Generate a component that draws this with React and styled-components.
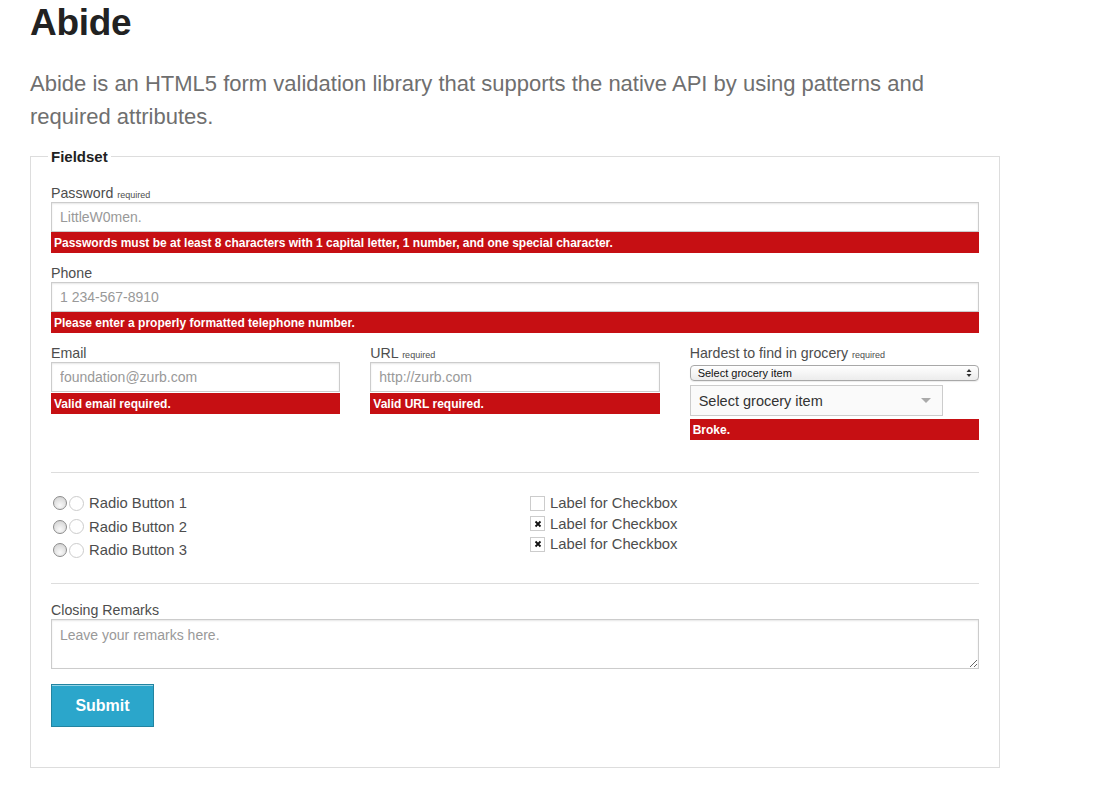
import React from "react";
import styled, { createGlobalStyle } from "styled-components";

const GlobalStyle = createGlobalStyle`
  body {
    margin: 0;
    background: #fff;
    font-family: "Liberation Sans", Arial, sans-serif;
    color: #222;
  }
  * { box-sizing: border-box; }
`;

const Page = styled.div`
  padding: 0 30px 40px 30px;
  width: 1000px;
`;

const Title = styled.h1`
  margin: 0;
  padding-top: 4px;
  font-size: 37px;
  line-height: 38px;
  font-weight: bold;
  color: #222;
  letter-spacing: -0.3px;
`;

const Lead = styled.p`
  margin: 25px 0 0 0;
  font-size: 22px;
  line-height: 33px;
  color: #6f6f6f;
  max-width: 920px;
`;

const Fieldset = styled.fieldset`
  margin: 15px 0 0 0;
  width: 970px;
  border: 1px solid #ddd;
  padding: 0 20px 40px 20px;
`;

const Legend = styled.legend`
  font-weight: bold;
  font-size: 15px;
  color: #222;
  background: #fff;
  padding: 0 3px;
  margin-left: -3px;
`;

const Field = styled.div`
  margin-bottom: ${(p) => (p.$last ? "0" : "10px")};
  margin-top: ${(p) => (p.$first ? "18px" : "0")};
`;

const Label = styled.label`
  display: block;
  font-size: 14.2px;
  line-height: 18px;
  padding-top: 1px;
  color: #4d4d4d;
`;

const Small = styled.small`
  font-size: 9px;
  line-height: 1;
  color: #4d4d4d;
`;

const Input = styled.input`
  display: block;
  width: 100%;
  height: 30px;
  border: 1px solid #ccc;
  box-shadow: inset 0 1px 2px rgba(0, 0, 0, 0.1);
  padding: 0 8px 1px 8px;
  font-family: inherit;
  font-size: 14px;
  color: #333;
  background: #fff;
  &::placeholder { color: #999; }
`;

const Textarea = styled.textarea`
  display: block;
  width: 100%;
  height: 50px;
  border: 1px solid #ccc;
  box-shadow: inset 0 1px 2px rgba(0, 0, 0, 0.1);
  padding: 7px 8px;
  font-family: inherit;
  font-size: 14px;
  color: #333;
  resize: vertical;
  &::placeholder { color: #999; }
`;

const Error = styled.small`
  display: block;
  background: #c60f13;
  color: #fff;
  font-weight: bold;
  font-size: 12px;
  line-height: 14px;
  padding: 4px 3px 3px 3px;
  margin-top: ${(p) => p.$gap || 0}px;
`;

const Row = styled.div`
  display: grid;
  grid-template-columns: ${(p) => p.$cols};
  column-gap: 30px;
`;

const NativeSelect = styled.div`
  margin-top: 3px;
  height: 16px;
  border: 1px solid #a8a8a8;
  border-radius: 4px;
  background: linear-gradient(#ffffff, #ececec);
  box-shadow: 0 1px 1px rgba(0, 0, 0, 0.08);
  display: flex;
  align-items: center;
  justify-content: space-between;
  padding: 0 6px 0 7px;
  font-size: 11px;
  color: #111;
`;

const CustomDropdown = styled.div`
  margin-top: 4px;
  width: 253px;
  height: 31px;
  border: 1px solid #ccc;
  background: #fafafa;
  display: flex;
  align-items: center;
  justify-content: space-between;
  padding: 0 11px 0 8px;
  font-size: 14.5px;
  color: #333;
`;

const Caret = styled.span`
  width: 0;
  height: 0;
  border-left: 5px solid transparent;
  border-right: 5px solid transparent;
  border-top: 5px solid #aaa;
`;

const Rule = styled.hr`
  border: 0;
  border-top: 1px solid #ddd;
  margin: ${(p) => p.$m};
`;

const OptionList = styled.div`
  display: flex;
  flex-direction: column;
  gap: ${(p) => p.$gap}px;
`;

const OptionRow = styled.label`
  display: flex;
  align-items: center;
  font-size: 14.8px;
  line-height: 20px;
  color: #4d4d4d;
`;

const NativeRadio = styled.span`
  width: 14px;
  height: 14px;
  border-radius: 50%;
  border: 1px solid #8c8c8c;
  background: radial-gradient(circle at 50% 70%, #fafafa, #d6d6d6 80%);
  margin-left: 2px;
  margin-right: 2px;
`;

const CustomRadio = styled.span`
  width: 15px;
  height: 15px;
  border-radius: 50%;
  border: 1px solid #ccc;
  background: #fff;
  margin-right: 5px;
`;

const CheckBox = styled.span`
  width: 15px;
  height: 15px;
  border: 1px solid #ccc;
  background: #fff;
  display: flex;
  align-items: center;
  justify-content: center;
  margin-right: 5px;
`;

const Button = styled.button`
  margin-top: 15px;
  width: 103px;
  height: 43px;
  background: #2ba6cb;
  border: 1px solid #2284a1;
  box-shadow: inset 0 1px 0 rgba(255, 255, 255, 0.5);
  color: #fff;
  font-family: inherit;
  font-weight: bold;
  font-size: 16px;
  padding: 0;
`;

const Check = () => (
  <svg width="8" height="8" viewBox="0 0 8 8">
    <path d="M1.5 1.5 L6.5 6.5 M6.5 1.5 L1.5 6.5" stroke="#111" strokeWidth="1.8" />
  </svg>
);

const UpDown = () => (
  <svg width="6" height="10" viewBox="0 0 6 10">
    <path d="M0.5 4 L3 1 L5.5 4 Z M0.5 6 L3 9 L5.5 6 Z" fill="#333" />
  </svg>
);

const radios = ["Radio Button 1", "Radio Button 2", "Radio Button 3"];
const checks = [false, true, true];

export default function App() {
  return (
    <>
      <GlobalStyle />
      <Page>
        <Title>Abide</Title>
        <Lead>
          Abide is an HTML5 form validation library that supports the native API by using patterns and
          required attributes.
        </Lead>
        <Fieldset>
          <Legend>Fieldset</Legend>
          <Field $first>
            <Label>
              Password <Small>required</Small>
            </Label>
            <Input placeholder="LittleW0men." />
            <Error>
              Passwords must be at least 8 characters with 1 capital letter, 1 number, and one special character.
            </Error>
          </Field>
          <Field>
            <Label>Phone</Label>
            <Input placeholder="1 234-567-8910" />
            <Error>Please enter a properly formatted telephone number.</Error>
          </Field>
          <Row $cols="1fr 1fr 1fr">
            <Field>
              <Label>Email</Label>
              <Input placeholder="foundation@zurb.com" />
              <Error $gap={1}>Valid email required.</Error>
            </Field>
            <Field>
              <Label>
                URL <Small>required</Small>
              </Label>
              <Input placeholder="http://zurb.com" />
              <Error $gap={1}>Valid URL required.</Error>
            </Field>
            <Field>
              <Label>
                Hardest to find in grocery <Small>required</Small>
              </Label>
              <NativeSelect>
                <span>Select grocery item</span>
                <UpDown />
              </NativeSelect>
              <CustomDropdown>
                <span>Select grocery item</span>
                <Caret />
              </CustomDropdown>
              <Error $gap={3}>Broke.</Error>
            </Field>
          </Row>
          <Rule $m="22px 0 20px 0" />
          <Row $cols="1fr 1fr">
            <OptionList $gap={3.5}>
              {radios.map((r) => (
                <OptionRow key={r}>
                  <NativeRadio />
                  <CustomRadio />
                  {r}
                </OptionRow>
              ))}
            </OptionList>
            <OptionList $gap={0.5}>
              {checks.map((c, i) => (
                <OptionRow key={i}>
                  <CheckBox>{c && <Check />}</CheckBox>
                  Label for Checkbox
                </OptionRow>
              ))}
            </OptionList>
          </Row>
          <Rule $m="23px 0 16px 0" />
          <Field $last>
            <Label>Closing Remarks</Label>
            <Textarea placeholder="Leave your remarks here." />
          </Field>
          <Button>Submit</Button>
        </Fieldset>
      </Page>
    </>
  );
}
